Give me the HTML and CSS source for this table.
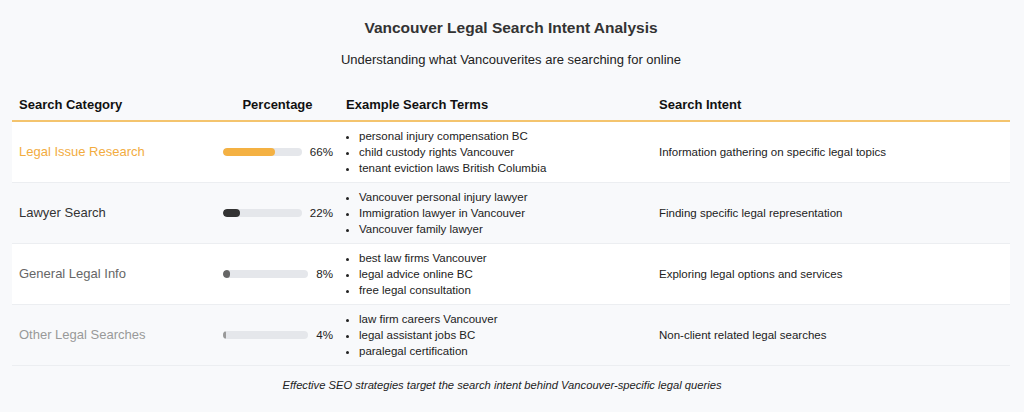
FILE: index.html
```html
<!DOCTYPE html>
<html>
<head>
<meta charset="utf-8">
<link rel="stylesheet" href="styles.css">
</head>
<body>
<div class="page">
  <h1 class="title">Vancouver Legal Search Intent Analysis</h1>
  <p class="subtitle">Understanding what Vancouverites are searching for online</p>
  <table class="intent-table">
    <colgroup>
      <col class="c1"><col class="c2"><col class="c3"><col class="c4">
    </colgroup>
    <thead>
      <tr>
        <th>Search Category</th>
        <th class="center">Percentage</th>
        <th>Example Search Terms</th>
        <th>Search Intent</th>
      </tr>
    </thead>
    <tbody>
      <tr class="row-a">
        <td class="cat cat-1">Legal Issue Research</td>
        <td class="pct-cell"><div class="pct"><div class="track"><div class="fill fill-1" style="width:66%"></div></div><span class="pct-text">66%</span></div></td>
        <td><ul class="terms"><li>personal injury compensation BC</li><li>child custody rights Vancouver</li><li>tenant eviction laws British Columbia</li></ul></td>
        <td class="intent">Information gathering on specific legal topics</td>
      </tr>
      <tr class="row-b">
        <td class="cat cat-2">Lawyer Search</td>
        <td class="pct-cell"><div class="pct"><div class="track"><div class="fill fill-2" style="width:22%"></div></div><span class="pct-text">22%</span></div></td>
        <td><ul class="terms"><li>Vancouver personal injury lawyer</li><li>Immigration lawyer in Vancouver</li><li>Vancouver family lawyer</li></ul></td>
        <td class="intent">Finding specific legal representation</td>
      </tr>
      <tr class="row-a">
        <td class="cat cat-3">General Legal Info</td>
        <td class="pct-cell"><div class="pct"><div class="track"><div class="fill fill-3" style="width:8%"></div></div><span class="pct-text">8%</span></div></td>
        <td><ul class="terms"><li>best law firms Vancouver</li><li>legal advice online BC</li><li>free legal consultation</li></ul></td>
        <td class="intent">Exploring legal options and services</td>
      </tr>
      <tr class="row-b">
        <td class="cat cat-4">Other Legal Searches</td>
        <td class="pct-cell"><div class="pct"><div class="track"><div class="fill fill-4" style="width:4%"></div></div><span class="pct-text">4%</span></div></td>
        <td><ul class="terms"><li>law firm careers Vancouver</li><li>legal assistant jobs BC</li><li>paralegal certification</li></ul></td>
        <td class="intent">Non-client related legal searches</td>
      </tr>
    </tbody>
  </table>
  <p class="footer">Effective SEO strategies target the search intent behind Vancouver-specific legal queries</p>
</div>
</body>
</html>
```
FILE: styles.css
```css
html, body {
  margin: 0;
  padding: 0;
  background: #f8f9fb;
  font-family: "Liberation Sans", Arial, sans-serif;
  color: #222;
}
.page {
  padding: 18px 14px 0 12px;
}
.title {
  margin: 0;
  text-align: center;
  font-size: 15.5px;
  line-height: 20px;
  font-weight: bold;
  color: #333;
}
.subtitle {
  margin: 13px 0 0;
  text-align: center;
  font-size: 13px;
  line-height: 18px;
  color: #222;
}
.intent-table {
  margin-top: 15px;
  width: 100%;
  border-collapse: collapse;
  table-layout: fixed;
}
.c1 { width: 204px; }
.c2 { width: 123px; }
.c3 { width: 313px; }
.intent-table th {
  text-align: left;
  font-size: 13px;
  line-height: 16px;
  font-weight: bold;
  color: #111;
  padding: 13px 7px 7px;
  border-bottom: 2px solid #f4c46e;
}
.intent-table th.center { text-align: center; }
.intent-table td {
  padding: 6px 7px;
  border-bottom: 1px solid #eceef1;
  vertical-align: middle;
  font-size: 11.5px;
  line-height: 16px;
  color: #222;
}
.intent-table td.pct-cell { padding-right: 6px; }
.row-a { background: #ffffff; }
.row-b { background: #f8f9fb; }
.intent-table td.cat { font-size: 13px; }
.cat-1 { color: #f2ac3f !important; }
.cat-2 { color: #333 !important; }
.cat-3 { color: #666 !important; }
.cat-4 { color: #999 !important; }
.pct {
  display: flex;
  align-items: center;
  gap: 8px;
}
.track {
  flex: 1;
  height: 8px;
  border-radius: 4px;
  background: #e5e7eb;
  overflow: hidden;
}
.fill {
  height: 100%;
  border-radius: 4px;
}
.fill-1 { background: #f4b143; }
.fill-2 { background: #333; }
.fill-3 { background: #666; }
.fill-4 { background: #999; }
.pct-text {
  font-size: 11.6px;
  color: #222;
}
.terms {
  margin: 0;
  padding-left: 13px;
}
.terms li { line-height: 16px; }
.footer {
  margin: 12px 0 0;
  padding-right: 18px;
  text-align: center;
  font-size: 11.2px;
  line-height: 14px;
  font-style: italic;
  color: #222;
}
```
